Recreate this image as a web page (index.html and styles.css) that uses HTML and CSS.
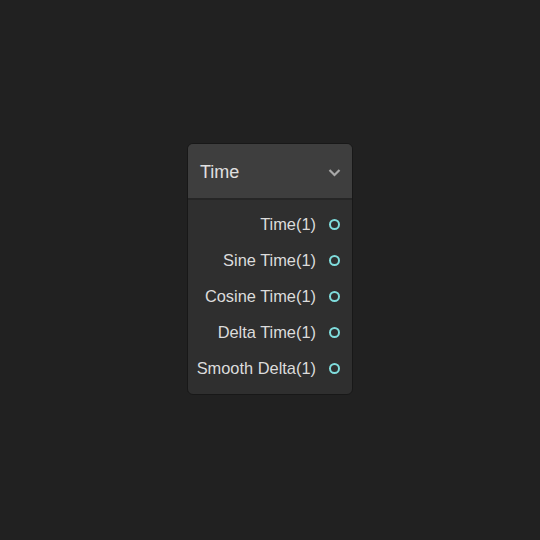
FILE: index.html
```html
<!DOCTYPE html>
<html>
<head>
<meta charset="utf-8">
<link rel="stylesheet" href="styles.css">
</head>
<body>
<div class="canvas">
  <div class="node">
    <div class="node-header">
      <span class="node-title">Time</span>
      <svg class="chevron" width="13" height="9" viewBox="0 0 13 9"><path d="M1.5 2 L6.5 7 L11.5 2" fill="none" stroke="#a8a8a8" stroke-width="2.2"/></svg>
    </div>
    <div class="node-body">
      <div class="port-row"><span class="port-label">Time(1)</span><span class="port"></span></div>
      <div class="port-row"><span class="port-label">Sine Time(1)</span><span class="port"></span></div>
      <div class="port-row"><span class="port-label">Cosine Time(1)</span><span class="port"></span></div>
      <div class="port-row"><span class="port-label">Delta Time(1)</span><span class="port"></span></div>
      <div class="port-row"><span class="port-label">Smooth Delta(1)</span><span class="port"></span></div>
    </div>
  </div>
</div>
</body>
</html>
```
FILE: styles.css
```css
html, body {
  margin: 0;
  padding: 0;
  background: #212121;
  width: 540px;
  height: 540px;
  overflow: hidden;
}
.canvas {
  padding: 143px 0 0 187px;
  font-family: "Liberation Sans", Arial, sans-serif;
}
.node {
  width: 164px;
  border: 1px solid #181818;
  border-radius: 6px;
  background: #2f2f2f;
  overflow: hidden;
}
.node-header {
  background: #3e3e3e;
  border-bottom: 2px solid #262626;
  display: flex;
  align-items: center;
  justify-content: space-between;
  padding: 2px 11px 0 12px;
  box-sizing: border-box;
  height: 56px;
}
.node-title {
  color: #e0e0e0;
  font-size: 18px;
}
.chevron {
  display: block;
}
.node-body {
  padding: 6px 0 8px 0;
  display: flex;
  flex-direction: column;
}
.port-row {
  height: 36px;
  display: flex;
  align-items: center;
  justify-content: flex-end;
  padding-right: 12px;
  gap: 13px;
}
.port-label {
  color: #dcdcdc;
  font-size: 16.4px;
}
.port {
  width: 7px;
  height: 7px;
  border: 2px solid #7fdcdc;
  border-radius: 50%;
}
```
